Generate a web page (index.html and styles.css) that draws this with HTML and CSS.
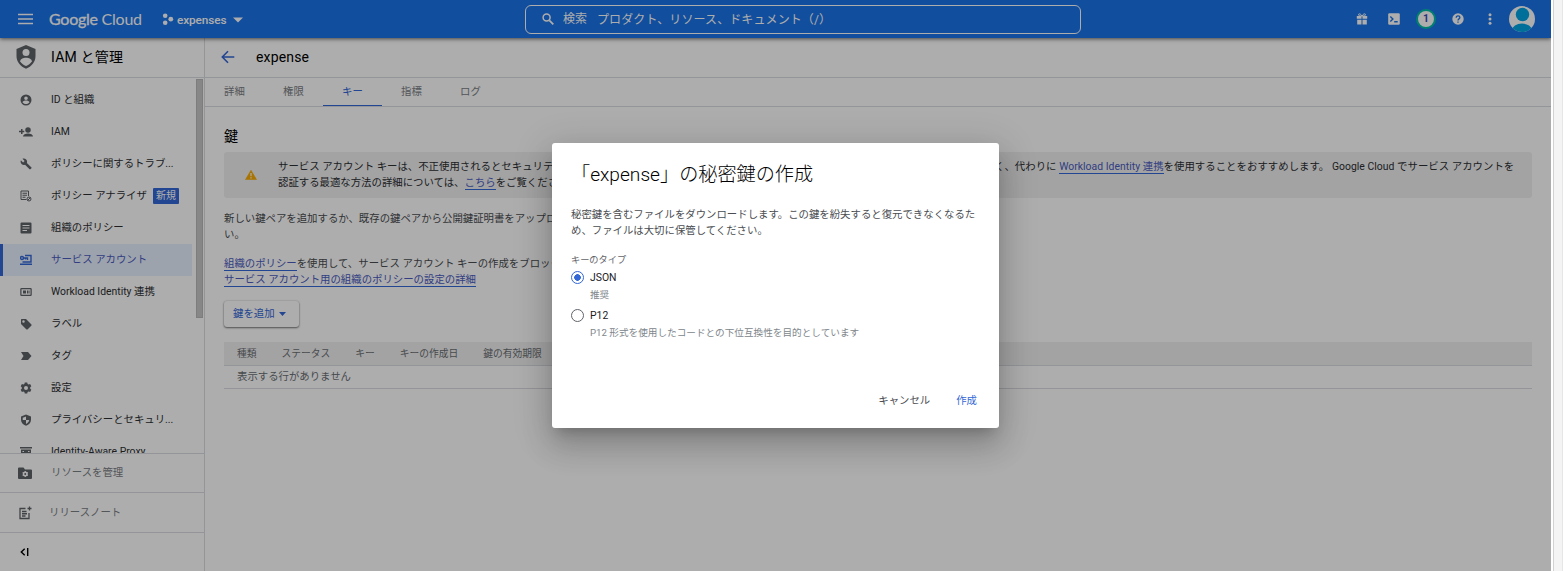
FILE: index.html
```html
<!DOCTYPE html>
<html lang="ja">
<head>
<meta charset="utf-8">
<title>expense – IAM と管理</title>
<link rel="stylesheet" href="styles.css">
</head>
<body>
<div class="app">
  <header class="topbar">
    <svg class="menu" width="16" height="12" viewBox="0 0 16 12" stroke="#fff" stroke-width="1.4"><path d="M0 1.5h15M0 6h15M0 10.5h15"/></svg>
    <div class="logo"><b>Google</b> <span>Cloud</span></div>
    <div class="project">
      <svg width="12" height="13" viewBox="0 0 12 13" fill="#fff"><circle cx="3.2" cy="2.7" r="2.3"/><circle cx="8.8" cy="6.2" r="2.4"/><circle cx="3.2" cy="9.8" r="2.3"/></svg>
      <span>expenses</span>
      <svg width="10" height="6" viewBox="0 0 10 6" fill="#fff"><path d="M0 .5h10L5 5.5z"/></svg>
    </div>
    <div class="search">
      <svg width="12" height="12" viewBox="0 0 12 12" fill="none" stroke="#fff" stroke-width="1.5"><circle cx="4.6" cy="4.6" r="3.5"/><path d="M7.3 7.3l4 4" stroke-width="1.8"/></svg>
      <span class="search-label">検索</span><span class="search-hint">プロダクト、リソース、ドキュメント（/）</span>
    </div>
    <div class="tools">
      <svg width="12" height="12" viewBox="0 0 12 12" fill="#fff"><path d="M.8 3h4.7v2.7H.8zM6.5 3h4.7v2.7H6.5zM1.2 6.7h4.3v4.8H1.2zM6.5 6.7h4.3v4.8H6.5z"/><path d="M6 3C5 .8 2.5.2 2.5 1.7 2.5 3 4.5 3 6 3zm0 0C7 .8 9.500.2 9.500 1.700 9.500 3 7.500 3 6 3z" fill="none" stroke="#fff"/></svg>
      <svg width="12" height="12" viewBox="0 0 12 12"><rect x=".2" y=".2" width="11.600" height="11.600" rx="1.200" fill="#fff"/><path d="M2.300 3.500L4.900 6 2.300 8.500M6.200 8.700h3.500" fill="none" stroke="#1a73e8" stroke-width="1.400"/></svg>
      <span class="count">1</span>
      <svg width="12" height="12" viewBox="0 0 12 12"><circle cx="6" cy="6" r="5.700" fill="#fff"/><path d="M4.200 4.800C4.200 2.200 7.900 2.400 7.900 4.600 7.900 5.900 6 5.900 6 7.400M6 8.400v1.300" fill="none" stroke="#1a73e8" stroke-width="1.300"/></svg>
      <svg width="12" height="12" viewBox="0 0 12 12" fill="#fff"><circle cx="6" cy="1.700" r="1.500"/><circle cx="6" cy="6" r="1.500"/><circle cx="6" cy="10.300" r="1.500"/></svg>
    </div>
    <svg class="avatar" width="26" height="26" viewBox="0 0 26 26"><defs><clipPath id="av"><circle cx="13" cy="13" r="13"/></clipPath></defs><g clip-path="url(#av)"><path fill="#fff" d="M0 0h26v26H0z"/><circle cx="13.500" cy="8.500" r="6.700" fill="#00a4e4"/><ellipse cx="13" cy="24.500" rx="10" ry="7" fill="#00a4e4"/></g></svg>
  </header>

  <div class="body">
    <aside class="side">
      <div class="side-head">
        <svg width="20" height="24" viewBox="0 0 20 24"><path fill="#5f6368" d="M10 0l9.500 4v7c0 6-4 10.500-9.500 12.700C4.500 21.500.5 17 .5 11V4z"/><circle cx="10" cy="7.500" r="3.500" fill="#fff"/><path fill="#fff" d="M4.200 16.500c0-5 11.600-5 11.600 0-1.500 2-3.500 3.600-5.800 4.500-2.300-.9-4.300-2.500-5.800-4.500z"/></svg>
        <span>IAM と管理</span>
      </div>
      <nav class="nav">
        <a class="item"><svg viewBox="0 0 24 24"><path d="M12 1a11 11 0 100 22 11 11 0 000-22zm0 4a3.600 3.600 0 110 7.200A3.600 3.600 0 0112 5zm0 15c-3 0-5.500-1.400-7-3.600.2-2.400 4.600-3.500 7-3.500s6.800 1.100 7 3.500c-1.500 2.200-4 3.600-7 3.600z"/></svg><span>ID と組織</span></a>
        <a class="item"><svg class="wide" viewBox="0 0 28 24"><circle cx="18" cy="8" r="5.500"/><path d="M8 21c0-8 20-8 20 0zM4 6h3v3.500h3.500v3H7V16H4v-3.500H0v-3h4z"/></svg><span>IAM</span></a>
        <a class="item"><svg viewBox="0 0 24 24"><path d="M23 19l-9.200-9.200c.9-2.300.4-5-1.500-6.900-2-2-5-2.400-7.400-1.300L9.200 5.900l-3 3L1.800 4.600C.6 7 1.100 10 3.100 12c1.900 1.900 4.600 2.400 6.900 1.500l9.200 9.200c.4.4 1 .4 1.400 0l2.300-2.300c.5-.4.500-1.100.100-1.400z"/></svg><span>ポリシーに関するトラブ...</span></a>
        <a class="item"><svg viewBox="0 0 24 24" fill="none" stroke="#5f6368" stroke-width="2"><path d="M13 19H2V2h15v10M5 6.500h9M5 10.500h9M5 14.500h6"/><circle cx="18" cy="18" r="4"/><path d="M15 21l6-6"/></svg><span>ポリシー アナライザ</span><em>新規</em></a>
        <a class="item"><svg viewBox="0 0 24 24"><path fill-rule="evenodd" d="M3 1h18a2 2 0 012 2v18a2 2 0 01-2 2H3a2 2 0 01-2-2V3a2 2 0 012-2zm2 5v2.200h14V6zm0 5v2.200h14V11zm0 5v2.200h9V16z"/></svg><span>組織のポリシー</span></a>
        <a class="item active"><svg viewBox="0 0 24 24" fill="none" stroke="#3367d6" stroke-width="2.800"><circle cx="4" cy="8" r="3"/><path d="M7 8h8v4M11 8v3M10 3h12v13H5M0 20.500h24"/></svg><span>サービス アカウント</span></a>
        <a class="item"><svg viewBox="0 0 24 24"><path fill-rule="evenodd" d="M3 4h18a2.500 2.500 0 012.500 2.500v11A2.500 2.500 0 0121 20H3a2.500 2.500 0 01-2.500-2.500v-11A2.500 2.500 0 013 4zm0 2.500v11h18v-11z"/><path d="M6 9h6v6H6zM14 9h2v6h-2zM17 9h2v6h-2z"/></svg><span>Workload Identity 連携</span></a>
        <a class="item"><svg viewBox="0 0 24 24"><path fill-rule="evenodd" d="M2 3l1-1h9l11 11v2l-8 8h-2L2 12zm5 1.500a2.500 2.500 0 100 5 2.500 2.500 0 000-5z"/></svg><span>ラベル</span></a>
        <a class="item"><svg viewBox="0 0 24 24"><path d="M2 4h14l7 8-7 8H2l5-8z"/></svg><span>タグ</span></a>
        <a class="item"><svg viewBox="0 0 24 24"><path fill-rule="evenodd" d="M9.500 1h5l.7 3 2 1.200 3-1 2.500 4.300-2.300 2.200v2.600l2.300 2.200-2.500 4.300-3-1-2 1.200-.7 3h-5l-.7-3-2-1.200-3 1-2.500-4.300 2.300-2.200v-2.600L1.300 8.500l2.500-4.300 3 1 2-1.200zM12 8a4 4 0 100 8 4 4 0 000-8z"/></svg><span>設定</span></a>
        <a class="item"><svg viewBox="0 0 24 24"><path fill-rule="evenodd" d="M12 1L2 5v6.500C2 17 6 21.500 12 23.500c6-2 10-6.500 10-12V5zm0 4v7h6.500c-.5 3.500-3 6.500-6.500 7.800V12H5.500V7.500z"/></svg><span>プライバシーとセキュリ...</span></a>
        <a class="item"><svg viewBox="0 0 24 24"><path fill-rule="evenodd" d="M0 2h24v3H0zM2 7h20v12H2zm3 3v2h3v-2zm11 0v2h3v-2z"/></svg><span>Identity-Aware Proxy</span></a>
        <i class="thumb"></i>
      </nav>
      <div class="foot">
        <svg width="14" height="12" viewBox="0 0 28 24"><path fill="#5f6368" d="M2 1h9l3 4h12a2 2 0 012 2v15a2 2 0 01-2 2H2a2 2 0 01-2-2V3a2 2 0 012-2z"/><circle cx="14.500" cy="14" r="3.500" fill="none" stroke="#fff" stroke-width="3"/><path d="M14.500 8v3M14.500 17v3M9.300 11l2.600 1.500M17 15.500l2.600 1.500M9.300 17l2.600-1.500M17 12.500l2.600-1.500" stroke="#fff" stroke-width="2.200"/></svg>
        <span>リソースを管理</span>
      </div>
      <div class="foot notes">
        <svg width="14" height="14" viewBox="0 0 28 28" fill="none" stroke="#5f6368" stroke-width="2.600"><path d="M15 5H4v20h18V14M8 11h9M8 15.500h10M8 20h7M23 1v8M19 5h8"/></svg>
        <span>リリースノート</span>
      </div>
      <div class="foot collapse"><svg width="9" height="8" viewBox="0 0 9 8" fill="none" stroke="#000" stroke-width="1.400"><path d="M4.700.8L1.300 4l3.400 3.200M7.700 0v8"/></svg></div>
    </aside>

    <main class="main">
      <div class="page-head">
        <svg width="14" height="14" viewBox="0 0 14 14" fill="none" stroke="#3367d6" stroke-width="1.600"><path d="M13.300 7H1.500M7 1.200L1.300 7 7 12.800"/></svg>
        <span>expense</span>
      </div>
      <div class="tabs"><a>詳細</a><a>権限</a><a class="on">キー</a><a>指標</a><a>ログ</a></div>
      <section class="content">
        <h2>鍵</h2>
        <div class="notice">
          <svg width="12" height="10" viewBox="0 0 12 10"><path d="M6 .3L11.500 9.600H.5z" fill="#f9ab00" stroke="#f9ab00" stroke-width=".6" stroke-linejoin="round"/><path d="M6 3v3.300M6 7.200v1.200" stroke="#fff" stroke-width="1.200"/></svg>
          <div class="notice-text">
            <div class="split"><span class="lead">サービス アカウント キーは、不正使用されるとセキュリティ</span><span class="tail">く、代わりに <a>Workload Identity 連携</a>を使用することをおすすめします。 Google Cloud でサービス アカウントを</span></div>
            <div>認証する最適な方法の詳細については、<a>こちら</a>をご覧ください</div>
          </div>
        </div>
        <p class="first">新しい鍵ペアを追加するか、既存の鍵ペアから公開鍵証明書をアップロ<br>い。</p>
        <p class="second"><a>組織のポリシー</a>を使用して、サービス アカウント キーの作成をブロック<br><a>サービス アカウント用の組織のポリシーの設定の詳細</a></p>
        <button class="add">鍵を追加<svg width="7" height="4" viewBox="0 0 7 4" fill="#3367d6"><path d="M0 0h7L3.500 4z"/></svg></button>
        <div class="table">
          <div class="thead"><span>種類</span><span>ステータス</span><span>キー</span><span>キーの作成日</span><span>鍵の有効期限</span></div>
          <div class="trow">表示する行がありません</div>
        </div>
      </section>
    </main>
  </div>

  <div class="scrim"></div>
  <div class="dialog">
    <h1>「expense」の秘密鍵の作成</h1>
    <p>秘密鍵を含むファイルをダウンロードします。この鍵を紛失すると復元できなくなるため、ファイルは大切に保管してください。</p>
    <div class="kind">キーのタイプ</div>
    <div class="opt"><i class="radio checked"></i><span>JSON</span></div>
    <div class="hint">推奨</div>
    <div class="opt"><i class="radio"></i><span>P12</span></div>
    <div class="hint">P12 形式を使用したコードとの下位互換性を目的としています</div>
    <div class="actions"><a>キャンセル</a><a class="primary">作成</a></div>
  </div>
</div>
<div class="gutter"></div>
</body>
</html>
```
FILE: styles.css
```css
* { box-sizing: border-box; }
body {
  margin: 0;
  display: flex;
  height: 571px;
  overflow: hidden;
  font: 10.4px/16px Roboto, "Noto Sans CJK JP", sans-serif;
  color: #4a4d51;
  background: #fff;
}
svg { display: block; flex: none; }
.app { position: relative; width: 1551px; height: 571px; display: flex; flex-direction: column; overflow: hidden; }
.gutter { flex: 1; margin-left: 2px; background: #f4f4f4; border-left: 1px solid #d2d2d2; border-right: 1px solid #e6e6e6; }

.topbar {
  position: relative;
  height: 38px;
  flex: none;
  display: flex;
  align-items: center;
  color: #fff;
  background: #1a73e8;
  box-shadow: 0 1px 4px rgba(0,0,0,.6);
}
.menu { margin-left: 18px; }
.logo { width: 128px; flex: none; padding-left: 15px; font: 16px/20px Lato, sans-serif; white-space: nowrap; letter-spacing: -.25px; }
.logo b { font-weight: 400; -webkit-text-stroke: .3px #fff; }
.project { width: 363px; flex: none; display: flex; align-items: center; }
.project span { width: 56px; margin-left: 3px; font-size: 11.8px; font-weight: 500; letter-spacing: -.1px; line-height: 20px; padding-top: 2px; }
.project svg:last-child { margin-top: 2px; }
.search {
  width: 556px;
  height: 29px;
  flex: none;
  padding-left: 16px;
  display: flex;
  align-items: center;
  border: 1px solid #fff;
  border-radius: 6px;
  font-size: 12px;
}
.search-label { width: 34px; margin-left: 9px; }
.search-hint { letter-spacing: .1px; white-space: nowrap; padding-top: 1px; }
.tools { display: flex; flex: none; align-items: center; gap: 20px; width: 153px; margin-left: 275px; }
.count {
  width: 20px;
  height: 20px;
  margin: 0 -4px;
  border: 2px solid #00bfa5;
  border-radius: 50%;
  background: #fff;
  color: #3c4bb5;
  font-weight: 700;
  text-align: center;
}

.body { flex: 1; display: flex; min-height: 0; }
.side { width: 205px; flex: none; display: flex; flex-direction: column; border-right: 1px solid #dadce0; }
.side-head { height: 40px; flex: none; display: flex; align-items: center; gap: 15px; padding: 0 0 1px 16px; border-bottom: 1px solid #dadce0; font-size: 14px; letter-spacing: .2px; color: #000; }
.nav { position: relative; height: 375px; flex: none; padding-top: 6px; overflow: hidden; }
.item { width: 192px; height: 32px; display: flex; align-items: center; padding-left: 20px; color: #2c2e31; white-space: nowrap; }
.item svg { width: 12px; height: 12px; margin-right: 19px; fill: #5f6368; }
.item svg[fill="none"] { fill: none; }
.item svg.wide { width: 14px; margin-left: -1px; margin-right: 18px; }
.item em { margin-left: 6px; padding: 0 3px; width: 26px; border-radius: 1px; color: #fff; background: #3367d6; font-style: normal; font-size: 10px; }
.item.active { border-left: 3px solid #3367d6; padding-left: 17px; background: #e8f0fe; color: #4a5bc0; }
.thumb { position: absolute; right: 1px; top: 1px; width: 7px; height: 239px; background: #c8c8c8; border: 1px solid #b9b9b9; }
.foot { height: 39px; flex: none; display: flex; align-items: center; border-top: 1px solid #dadce0; padding-left: 18px; color: #7b8085; }
.foot span { margin-left: 19px; }
.notes { height: 40px; }
.notes span { margin-left: 17px; }
.collapse { flex: 1; padding-left: 20px; }

.main { flex: 1; min-width: 0; }
.page-head { height: 40px; display: flex; align-items: center; padding: 0 0 1px 16px; gap: 21px; border-bottom: 1px solid #dadce0; font-size: 14px; letter-spacing: .15px; color: #000; }
.tabs { height: 29px; display: flex; border-bottom: 1px solid #dadce0; color: #7b8085; }
.tabs a { width: 59px; height: 28px; padding-top: 6px; text-align: center; }
.tabs .on { color: #3367d6; border-bottom: 1px solid #3367d6; }
.content { padding: 19px 19px 0; }
.content a { color: #4a5bc0; border-bottom: 1px solid #3367d6; }
.content h2 { margin: 0 0 6px; font-size: 14px; line-height: 20px; font-weight: 400; color: #000; }
.notice { height: 46px; display: flex; align-items: center; padding-left: 21px; border-radius: 3px; background: #f1f1f1; color: #2c2e31; }
.notice-text { margin-left: 21px; white-space: nowrap; }
.split { display: flex; }
.lead { width: 716px; }
.tail { letter-spacing: .03px; }
.content p { margin: 0; white-space: nowrap; }
.first { padding-top: 13px; }
.second { padding-top: 13px; }
.add {
  display: flex;
  align-items: center;
  gap: 4px;
  width: 75px;
  height: 26px;
  margin-top: 13px;
  padding: 0 0 0 9px;
  border: 0;
  border-radius: 3px;
  background: #fff;
  font: inherit;
  color: #3367d6;
  box-shadow: 0 1px 2px rgba(0,0,0,.5), 0 0 2px rgba(0,0,0,.2);
}
.table { margin-top: 15px; color: #6a6e73; }
.thead { height: 24px; display: flex; align-items: center; gap: 25px; padding-left: 13px; background: #f1f1f1; border-bottom: 1px solid #dadce0; font-size: 9.75px; }
.trow { height: 23px; padding: 3px 0 0 13px; border-bottom: 1px solid #dadce0; }

.scrim { position: absolute; inset: 0; background: rgba(0,0,0,.32); }
.dialog {
  position: absolute;
  left: 552px;
  top: 143px;
  width: 447px;
  height: 285px;
  padding: 19px;
  border-radius: 3px;
  background: #fff;
  box-shadow: 0 9px 12px -6px rgba(0,0,0,.2), 0 19px 30px 2px rgba(0,0,0,.14), 0 7px 37px 6px rgba(0,0,0,.12);
}
.dialog h1 { margin: 0; padding-top: 1px; font-size: 19.15px; line-height: 24px; font-weight: 300; color: #000; }
.dialog p { margin: 20px -10px 0 0; width: 408px; }
.kind { margin-top: 13px; font-size: 9.2px; color: #5f6368; }
.opt { display: flex; align-items: center; height: 20px; gap: 6px; color: #202124; }
.radio { width: 13px; height: 13px; margin-top: -1px; border: 1px solid #5f6368; border-radius: 50%; }
.radio.checked { border-color: #3367d6; background: radial-gradient(circle, #3367d6 3px, #fff 3.6px); }
.hint { height: 18px; padding-left: 19px; font-size: 9.65px; line-height: 14px; color: #80868b; }
.actions { display: flex; justify-content: flex-end; gap: 26px; margin: 49px 3px 0 0; }
.actions .primary { color: #3367d6; }
```
